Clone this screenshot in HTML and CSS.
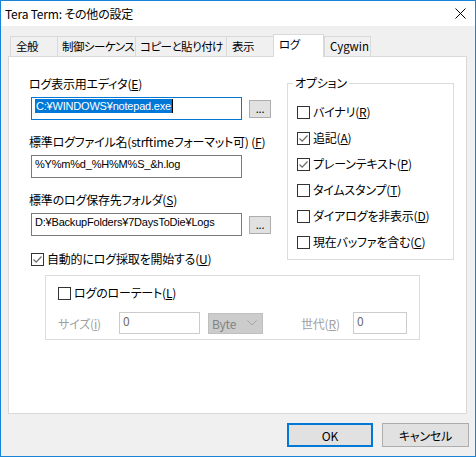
FILE: index.html
```html
<!DOCTYPE html>
<html lang="ja">
<head>
<meta charset="utf-8">
<title>Tera Term: その他の設定</title>
<link rel="stylesheet" href="styles.css">
</head>
<body>
<div class="window">
  <div class="titlebar">
    <span class="title">Tera Term: その他の設定</span>
    <svg class="close" width="11" height="11" viewBox="0 0 11 11"><path d="M0.5 0.5 L10.5 10.5 M10.5 0.5 L0.5 10.5" stroke="#000" stroke-width="1" fill="none"/></svg>
  </div>
  <div class="client">
    <div class="tabs">
      <div class="tab t1">全般</div>
      <div class="tab t2">制御シーケンス</div>
      <div class="tab t3">コピーと貼り付け</div>
      <div class="tab t4">表示</div>
      <div class="tab active">ログ</div>
      <div class="tab t6">Cygwin</div>
    </div>
    <div class="panel">
      <div class="cols">
        <div class="left">
          <div class="lbl">ログ表示用エディタ(<u>E</u>)</div>
          <div class="field">
            <div class="edit focus"><span class="sel">C:¥WINDOWS¥notepad.exe</span><span class="caret"></span></div>
            <div class="dots">...</div>
          </div>
          <div class="lbl">標準ログファイル名(strftimeフォーマット可) (<u>F</u>)</div>
          <div class="field">
            <div class="edit">%Y%m%d_%H%M%S_&amp;h.log</div>
          </div>
          <div class="lbl">標準のログ保存先フォルダ(<u>S</u>)</div>
          <div class="field">
            <div class="edit">D:¥BackupFolders¥7DaysToDie¥Logs</div>
            <div class="dots">...</div>
          </div>
          <div class="chk autostart"><span class="cb"><svg width="11" height="11" viewBox="0 0 11 11"><path d="M1.5 5.5 L4.2 8.2 L9.5 2.5" stroke="#6a6a6a" stroke-width="1.2" fill="none"/></svg></span>自動的にログ採取を開始する(<u>U</u>)</div>
        </div>
        <fieldset class="options">
          <legend>オプション</legend>
          <div class="opts">
            <div class="chk"><span class="cb"></span>バイナリ(<u>R</u>)</div>
            <div class="chk"><span class="cb"><svg width="11" height="11" viewBox="0 0 11 11"><path d="M1.5 5.5 L4.2 8.2 L9.5 2.5" stroke="#6a6a6a" stroke-width="1.2" fill="none"/></svg></span>追記(<u>A</u>)</div>
            <div class="chk"><span class="cb"><svg width="11" height="11" viewBox="0 0 11 11"><path d="M1.5 5.5 L4.2 8.2 L9.5 2.5" stroke="#6a6a6a" stroke-width="1.2" fill="none"/></svg></span>プレーンテキスト(<u>P</u>)</div>
            <div class="chk"><span class="cb"></span>タイムスタンプ(<u>T</u>)</div>
            <div class="chk"><span class="cb"></span>ダイアログを非表示(<u>D</u>)</div>
            <div class="chk"><span class="cb"></span>現在バッファを含む(<u>C</u>)</div>
          </div>
        </fieldset>
      </div>
      <div class="rotate">
        <div class="chk"><span class="cb"></span>ログのローテート(<u>L</u>)</div>
        <div class="rrow">
          <span class="dlbl size">サイズ(<u>i</u>)</span>
          <div class="dinput wide">0</div>
          <div class="select"><span>Byte</span><svg width="10" height="6" viewBox="0 0 10 6"><path d="M0.5 0.5 L5 5 L9.5 0.5" stroke="#a3a3a3" stroke-width="1" fill="none"/></svg></div>
          <span class="dlbl gen">世代(<u>R</u>)</span>
          <div class="dinput small">0</div>
        </div>
      </div>
    </div>
    <div class="buttons">
      <button class="btn ok">OK</button>
      <button class="btn">キャンセル</button>
    </div>
  </div>
</div>
</body>
</html>
```

FILE: styles.css
```css
* { box-sizing: border-box; }
html, body { margin: 0; padding: 0; }
body {
  width: 476px;
  height: 457px;
  font-family: "Noto Sans CJK JP", "Noto Sans", sans-serif;
  font-size: 12px;
  letter-spacing: -0.2px;
  font-feature-settings: "palt" 1;
  color: #000;
  background: #f0f0f0;
}
u { text-decoration: underline; text-underline-offset: 1px; }

.window {
  width: 476px;
  height: 457px;
  border: 1px solid #1883d7;
  display: flex;
  flex-direction: column;
  background: #f0f0f0;
}
.titlebar {
  flex: none;
  height: 25px;
  background: #fff;
  display: flex;
  align-items: center;
  justify-content: space-between;
  padding: 0 9px 0 4px;
}
.title { line-height: 25px; white-space: nowrap; }
.close { display: block; }

.client {
  flex: 1;
  padding: 8px 8px 0 7px;
  display: flex;
  flex-direction: column;
}

.tabs {
  flex: none;
  display: flex;
  align-items: flex-end;
  height: 22px;
  padding-left: 2px;
}
.tab {
  height: 20px;
  border: 1px solid #d9d9d9;
  border-right: none;
  border-bottom: none;
  padding-left: 5px;
  line-height: 19px;
  font-size: 11.5px;
  letter-spacing: -0.5px;
  white-space: nowrap;
  background: #f0f0f0;
}
.t1 { width: 47px; }
.t2 { width: 78px; padding-left: 4px; }
.t3 { width: 91px; padding-left: 4px; }
.t4 { width: 47px; }
.t6 { width: 47px; border-right: 1px solid #d9d9d9; letter-spacing: 0; }
.tab.active {
  width: 51px;
  height: 23px;
  background: #fff;
  border-right: 1px solid #d9d9d9;
  margin-bottom: -1px;
  position: relative;
  z-index: 1;
}

.panel {
  flex: none;
  width: 459px;
  height: 358px;
  border: 1px solid #d9d9d9;
  background: #fff;
}
.cols {
  display: flex;
  align-items: flex-start;
  padding-left: 20px;
}
.left {
  width: 242px;
  flex: none;
  padding-top: 19px;
}
.lbl {
  height: 16px;
  line-height: 16px;
  white-space: nowrap;
}
.field {
  display: flex;
  align-items: center;
  margin: 5px 0 14px 2px;
}
.edit {
  width: 211px;
  height: 23px;
  flex: none;
  border: 1px solid #7a7a7a;
  background: #fff;
  padding: 1px 3px 0;
  font-family: "Liberation Sans", "Noto Sans CJK JP", sans-serif;
  font-size: 11px;
  letter-spacing: -0.2px;
  line-height: 14px;
  white-space: nowrap;
  overflow: hidden;
}
.edit.focus { border-color: #0078d7; }
.sel {
  display: inline-block;
  vertical-align: top;
  height: 14px;
  padding: 0 1px;
  background: #0078d7;
  color: #fff;
}
.caret {
  display: inline-block;
  vertical-align: top;
  width: 1px;
  height: 14px;
  background: #000;
}
.dots {
  flex: none;
  width: 22px;
  height: 18px;
  margin-left: 7px;
  border: 1px solid #adadad;
  background: #e1e1e1;
  font-size: 11px;
  line-height: 14px;
  text-align: center;
}

.chk {
  display: flex;
  align-items: center;
  height: 16px;
  line-height: 16px;
  white-space: nowrap;
}
.cb {
  flex: none;
  width: 13px;
  height: 13px;
  border: 1px solid #333;
  background: #fff;
  margin-right: 3px;
  display: flex;
}
.autostart { margin: 15px 0 0 2px; }

.options {
  flex: none;
  width: 167px;
  min-width: 0;
  margin: 18px 0 0 16px;
  padding: 0 0 9px 5px;
  border: 1px solid #dcdcdc;
}
.options legend {
  padding: 0 2px;
  line-height: 16px;
}
.opts {
  display: flex;
  flex-direction: column;
  gap: 10px;
  margin-top: 13px;
  padding-left: 4px;
}

.rotate {
  width: 375px;
  height: 65px;
  margin: 8px 0 0 36px;
  border: 1px solid #dcdcdc;
  padding: 9px 0 0 12px;
}
.rrow {
  display: flex;
  align-items: center;
  margin-top: 11px;
}
.dlbl {
  flex: none;
  color: #a0a0a0;
  white-space: nowrap;
}
.size { width: 61px; }
.gen { width: 52px; margin-left: 38px; }
.dinput {
  flex: none;
  height: 22px;
  border: 1px solid #cccccc;
  background: #fff;
  color: #6d6d6d;
  padding: 0 3px;
  line-height: 15px;
}
.wide { width: 81px; }
.small { width: 54px; }
.select {
  flex: none;
  width: 55px;
  height: 21px;
  margin-left: 8px;
  background: #cccccc;
  border: 1px solid #bfbfbf;
  color: #838383;
  display: flex;
  align-items: center;
  justify-content: space-between;
  padding: 0 5px 0 3px;
}

.buttons {
  flex: none;
  display: flex;
  justify-content: flex-end;
  gap: 9px;
  margin: 9px -2px 0 0;
}
.btn {
  width: 86px;
  height: 24px;
  padding: 0;
  font: inherit;
  letter-spacing: inherit;
  color: #000;
  background: #e1e1e1;
  border: 1px solid #adadad;
}
.btn + .btn { width: 87px; }
.btn.ok { border: 2px solid #0078d7; }
```
